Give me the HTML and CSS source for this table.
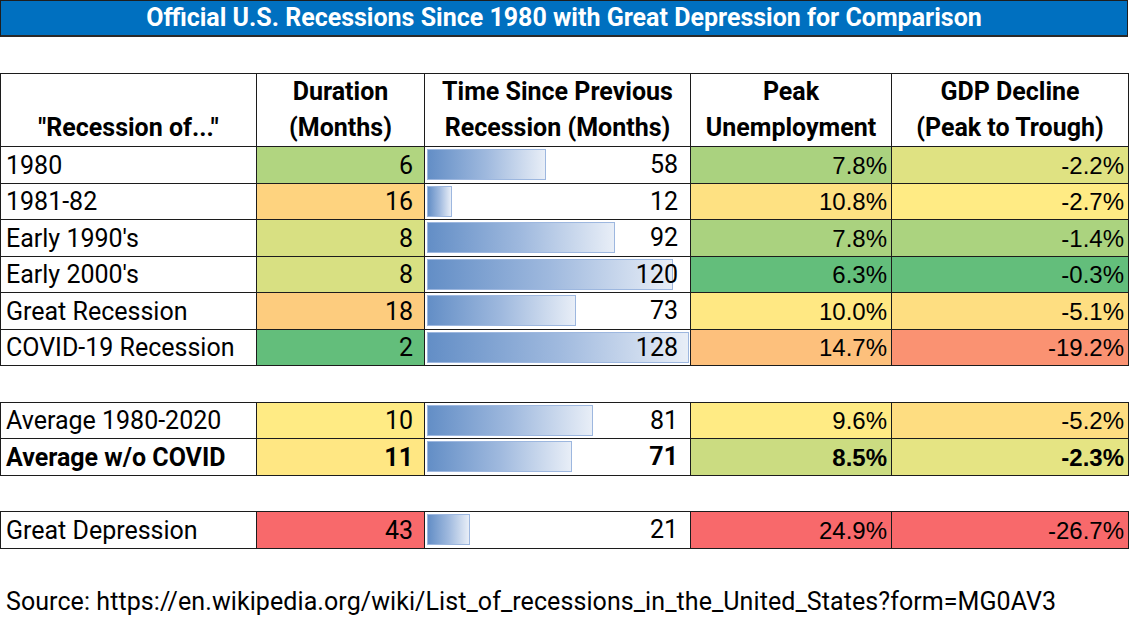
FILE: index.html
```html
<!DOCTYPE html>
<html lang="en">
<head>
<meta charset="utf-8">
<title>Official U.S. Recessions Since 1980</title>
<link rel="stylesheet" href="styles.css">
</head>
<body>
<div class="sheet">
  <div class="title">Official U.S. Recessions Since 1980 with Great Depression for Comparison</div>
  <table class="grid">
    <colgroup>
      <col class="c-name">
      <col class="c-dur">
      <col class="c-time">
      <col class="c-unemp">
      <col class="c-gdp">
    </colgroup>
    <thead>
      <tr class="head">
        <th class="h-name">"Recession of..."</th>
        <th>Duration<br>(Months)</th>
        <th>Time Since Previous<br>Recession (Months)</th>
        <th>Peak<br>Unemployment</th>
        <th>GDP Decline<br>(Peak to Trough)</th>
      </tr>
    </thead>
    <tbody>
      <tr>
        <td class="name">1980</td>
        <td class="num s-b1d580">6</td>
        <td class="bar-cell"><div class="bar-wrap"><div class="bar" style="width:45.3%"></div><span class="bar-num">58</span></div></td>
        <td class="pct s-aad27f">7.8%</td>
        <td class="pct s-dfe282">-2.2%</td>
      </tr>
      <tr>
        <td class="name">1981-82</td>
        <td class="num s-fed37f">16</td>
        <td class="bar-cell"><div class="bar-wrap"><div class="bar" style="width:9.4%"></div><span class="bar-num">12</span></div></td>
        <td class="pct s-fee182">10.8%</td>
        <td class="pct s-ffeb84">-2.7%</td>
      </tr>
      <tr>
        <td class="name">Early 1990's</td>
        <td class="num s-d8e082">8</td>
        <td class="bar-cell"><div class="bar-wrap"><div class="bar" style="width:71.9%"></div><span class="bar-num">92</span></div></td>
        <td class="pct s-aad27f">7.8%</td>
        <td class="pct s-abd37f">-1.4%</td>
      </tr>
      <tr>
        <td class="name">Early 2000's</td>
        <td class="num s-d8e082">8</td>
        <td class="bar-cell"><div class="bar-wrap"><div class="bar" style="width:93.8%"></div><span class="bar-num">120</span></div></td>
        <td class="pct s-63be7b">6.3%</td>
        <td class="pct s-63be7b">-0.3%</td>
      </tr>
      <tr>
        <td class="name">Great Recession</td>
        <td class="num s-fdcc7e">18</td>
        <td class="bar-cell"><div class="bar-wrap"><div class="bar" style="width:57%"></div><span class="bar-num">73</span></div></td>
        <td class="pct s-ffe883">10.0%</td>
        <td class="pct s-fede81">-5.1%</td>
      </tr>
      <tr>
        <td class="name">COVID-19 Recession</td>
        <td class="num s-63be7b">2</td>
        <td class="bar-cell"><div class="bar-wrap"><div class="bar" style="width:100%"></div><span class="bar-num">128</span></div></td>
        <td class="pct s-fdc07c">14.7%</td>
        <td class="pct s-fa9272">-19.2%</td>
      </tr>
      <tr class="spacer"><td colspan="5"></td></tr>
      <tr>
        <td class="name">Average 1980-2020</td>
        <td class="num s-ffeb84">10</td>
        <td class="bar-cell"><div class="bar-wrap"><div class="bar" style="width:63.3%"></div><span class="bar-num">81</span></div></td>
        <td class="pct s-ffeb84">9.6%</td>
        <td class="pct s-fedd81">-5.2%</td>
      </tr>
      <tr class="bold">
        <td class="name">Average w/o COVID</td>
        <td class="num s-ffe783">11</td>
        <td class="bar-cell"><div class="bar-wrap"><div class="bar" style="width:55.5%"></div><span class="bar-num">71</span></div></td>
        <td class="pct s-cbdc81">8.5%</td>
        <td class="pct s-e5e483">-2.3%</td>
      </tr>
      <tr class="spacer"><td colspan="5"></td></tr>
      <tr>
        <td class="name">Great Depression</td>
        <td class="num s-f8696b">43</td>
        <td class="bar-cell"><div class="bar-wrap"><div class="bar" style="width:16.4%"></div><span class="bar-num">21</span></div></td>
        <td class="pct s-f8696b">24.9%</td>
        <td class="pct s-f8696b">-26.7%</td>
      </tr>
    </tbody>
  </table>
  <p class="source">Source: https://en.wikipedia.org/wiki/List_of_recessions_in_the_United_States?form=MG0AV3</p>
</div>
</body>
</html>
```

FILE: styles.css
```css
html, body {
  margin: 0;
  padding: 0;
  background: #ffffff;
}

.sheet {
  width: 1128px;
  font-family: Roboto, "Liberation Sans", sans-serif;
  font-size: 25px;
  color: #000000;
}

.title {
  box-sizing: border-box;
  height: 37px;
  background: #0070c0;
  border: 1px solid #1e1e1e;
  border-bottom: 2px solid #2a2a2a;
  color: #ffffff;
  font-weight: 700;
  font-size: 25px;
  line-height: 34px;
  text-align: center;
}

.grid {
  margin-top: 36px;
  width: 1128px;
  table-layout: fixed;
  border-collapse: collapse;
}

.c-name { width: 256px; }
.c-dur { width: 168px; }
.c-time { width: 266px; }
.c-unemp { width: 201px; }
.c-gdp { width: 237px; }

.grid th,
.grid td {
  border: 1px solid #1c1c1c;
  padding: 0;
}

.head {
  height: 72px;
}

.grid th {
  font-weight: 700;
  text-align: center;
  vertical-align: bottom;
  line-height: 36px;
  white-space: nowrap;
}

.grid tbody tr:nth-child(odd) {
  height: 37px;
}

.grid tbody tr:nth-child(even) {
  height: 36px;
}

.grid td {
  vertical-align: bottom;
  line-height: 29px;
  padding-bottom: 3px;
  white-space: nowrap;
}

.grid td.name {
  text-align: left;
  padding-left: 5px;
}

.grid td.num {
  text-align: right;
  padding-right: 11px;
}

.grid td.pct {
  font-family: "Liberation Sans", Arial, sans-serif;
  font-size: 24px;
  text-align: right;
  padding-right: 4px;
}

.grid td.bar-cell {
  padding: 2px 1px 1px 2px;
  vertical-align: top;
}

.bar-wrap {
  display: grid;
  height: 31px;
}

.bar {
  grid-area: 1 / 1;
  box-sizing: border-box;
  height: 31px;
  background: linear-gradient(to right, #638ec6 0%, #9fb9de 50%, #e8eef7 100%);
  border: 1px solid #9db7df;
}

.bar-num {
  grid-area: 1 / 1;
  justify-self: end;
  align-self: end;
  line-height: 29px;
  padding-right: 11px;
  padding-bottom: 1px;
  position: relative;
}

.grid tr.spacer td {
  border-left: none;
  border-right: none;
  padding: 0;
}

.bold td {
  font-weight: 700;
}

.source {
  margin: 38px 0 0 0;
  padding-left: 6px;
  line-height: 29px;
  letter-spacing: 0.08px;
  white-space: nowrap;
}

.s-63be7b { background: #63be7b; }
.s-aad27f { background: #aad27f; }
.s-abd37f { background: #abd37f; }
.s-b1d580 { background: #b1d580; }
.s-cbdc81 { background: #cbdc81; }
.s-d8e082 { background: #d8e082; }
.s-dfe282 { background: #dfe282; }
.s-e5e483 { background: #e5e483; }
.s-ffeb84 { background: #ffeb84; }
.s-ffe883 { background: #ffe883; }
.s-ffe783 { background: #ffe783; }
.s-fee182 { background: #fee182; }
.s-fede81 { background: #fede81; }
.s-fedd81 { background: #fedd81; }
.s-fed37f { background: #fed37f; }
.s-fdcc7e { background: #fdcc7e; }
.s-fdc07c { background: #fdc07c; }
.s-fa9272 { background: #fa9272; }
.s-f8696b { background: #f8696b; }
```
